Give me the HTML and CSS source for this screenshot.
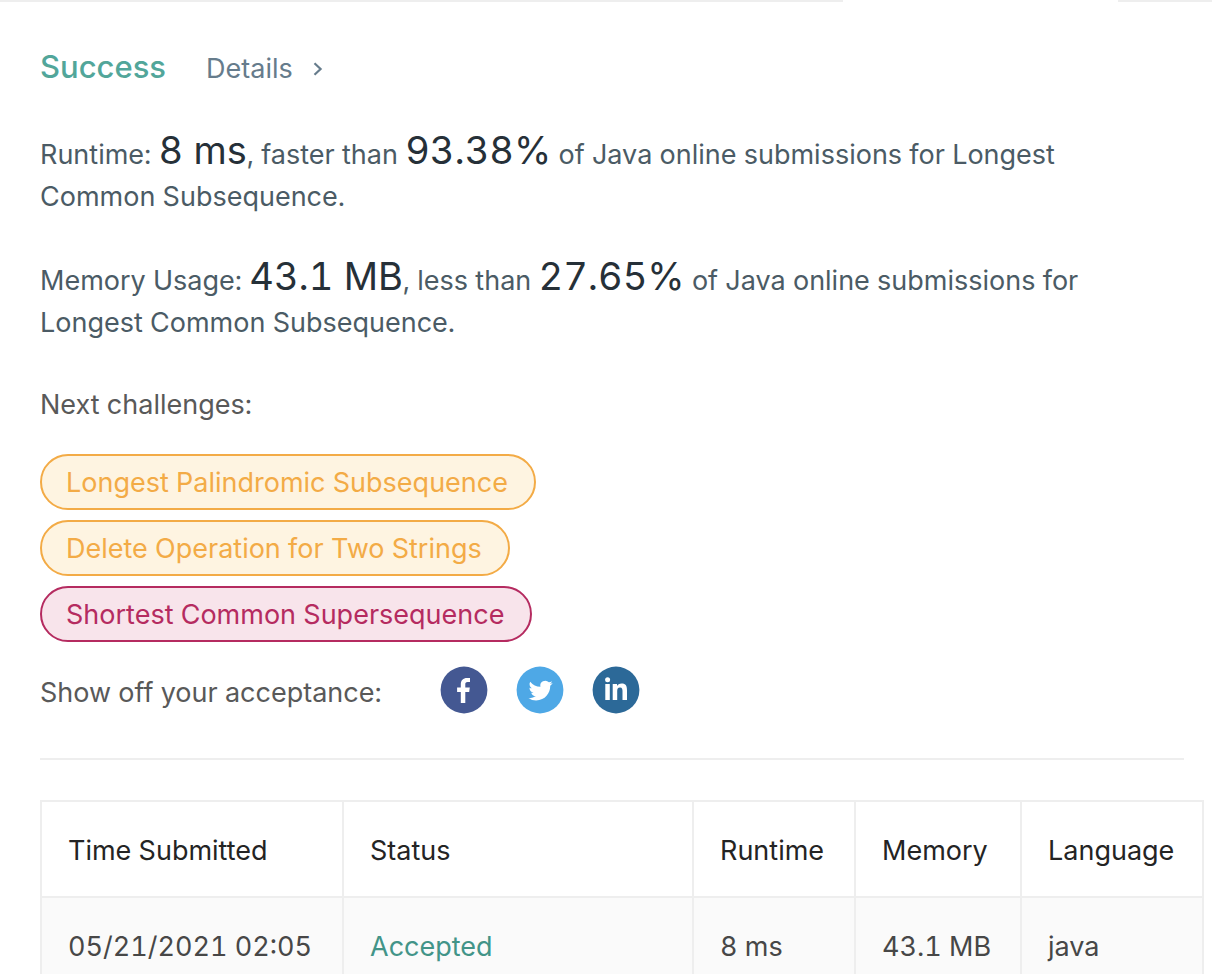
FILE: index.html
```html
<!DOCTYPE html>
<html lang="en">
<head>
<meta charset="utf-8">
<title>Submission result</title>
<link rel="stylesheet" href="styles.css">
</head>
<body>
<div class="tab-edge"><span class="edge edge-left"></span><span class="edge edge-right"></span></div>
<main class="panel">
  <header class="result">
    <h1 class="result-state">Success</h1>
    <a class="details" href="#details">Details
      <svg class="chevron" viewBox="0 0 10 14" aria-hidden="true"><path d="M1.5 1.2 7.6 7 1.5 12.8" fill="none" stroke="currentColor" stroke-width="2.2"/></svg>
    </a>
  </header>
  <div class="metrics">
    <p class="metric">Runtime: <span class="value">8 ms</span>, faster than <span class="value">93.38%</span> of Java online submissions for Longest Common Subsequence.</p>
    <p class="metric">Memory Usage: <span class="value">43.1 MB</span>, less than <span class="value">27.65%</span> of Java online submissions for Longest Common Subsequence.</p>
  </div>
  <section class="next">
    <h2 class="label">Next challenges:</h2>
    <div class="challenges">
      <a class="challenge medium" href="#lps">Longest Palindromic Subsequence</a>
      <a class="challenge medium" href="#delete">Delete Operation for Two Strings</a>
      <a class="challenge hard" href="#scs">Shortest Common Supersequence</a>
    </div>
  </section>
  <section class="share">
    <span class="label">Show off your acceptance:</span>
    <div class="share-links">
      <a href="#facebook" aria-label="Facebook"><svg class="social" viewBox="0 0 48 48"><circle cx="24" cy="24" r="23.4" fill="#445892"/><path fill="#fff" d="M20.8 37V26h-3.7v-4.400h3.700v-3.200c0-4.200 2.300-6.500 6.300-6.500 1.300 0 2.300.1 2.900.2v4h-2.400c-1.900 0-2.300.9-2.300 2.300v3.200h4.500l-.6 4.400h-3.900v11z"/></svg></a>
      <a href="#twitter" aria-label="Twitter"><svg class="social" viewBox="0 0 48 48"><circle cx="24" cy="24" r="23.4" fill="#4ea8e6"/><path transform="translate(12.500 12.800)" fill="#fff" d="M24.200 4.300a10 10 0 0 1-2.850.78 5 5 0 0 0 2.180-2.740 10 10 0 0 1-3.150 1.200 4.960 4.960 0 0 0-8.450 4.520A14.080 14.080 0 0 1 1.700 2.870a4.960 4.960 0 0 0 1.540 6.620 4.930 4.930 0 0 1-2.250-.62v.06a4.960 4.960 0 0 0 3.980 4.860 4.960 4.960 0 0 1-2.240.09 4.960 4.960 0 0 0 4.630 3.440A9.950 9.950 0 0 1 0 19.370a14.030 14.030 0 0 0 7.600 2.230c9.130 0 14.120-7.560 14.120-14.120l-.02-.64A10 10 0 0 0 24.200 4.300z"/></svg></a>
      <a href="#linkedin" aria-label="LinkedIn"><svg class="social" viewBox="0 0 48 48"><circle cx="24" cy="24" r="23.4" fill="#2c6998"/><circle cx="15.600" cy="13.700" r="2.500" fill="#fff"/><path fill="#fff" d="M13.300 17.900h4.500v16h-4.500zM20.700 17.900h4.300V20c.8-1.400 2.300-2.500 4.600-2.500 4.300 0 5.400 2.700 5.400 6.800v9.600h-4.500v-8.600c0-2-.2-3.900-2.500-3.900s-2.800 1.700-2.800 3.800v8.700h-4.500z"/></svg></a>
    </div>
  </section>
  <hr class="rule">
  <table class="submissions">
    <colgroup><col class="col-time"><col><col class="col-runtime"><col class="col-memory"><col class="col-language"></colgroup>
    <thead><tr><th>Time Submitted</th><th>Status</th><th>Runtime</th><th>Memory</th><th>Language</th></tr></thead>
    <tbody><tr><td>05/21/2021 02:05</td><td><a class="accepted" href="#submission">Accepted</a></td><td>8 ms</td><td>43.1 MB</td><td>java</td></tr></tbody>
  </table>
</main>
</body>
</html>
```
FILE: styles.css
```css
* { box-sizing: border-box; }
body {
  margin: 0;
  overflow: hidden;
  background: #fff;
  color: #595959;
  font: 27px/42px Inter, "Liberation Sans", sans-serif;
  font-variant-numeric: tabular-nums;
}
a { color: inherit; text-decoration: none; }
.tab-edge { display: flex; justify-content: space-between; gap: 275px; }
.edge { height: 2px; background: #eee; }
.edge-left { flex: 1; }
.edge-right { width: 94px; }
.panel { padding: 44px 28px 0 40px; }
.result { display: flex; align-items: baseline; gap: 40px; margin-bottom: 44px; }
.result-state { margin: 0; font-size: 31px; font-weight: 500; line-height: 42px; color: #52a69a; }
.details { display: flex; align-items: center; gap: 20px; color: #667c8c; }
.chevron { width: 10px; height: 14px; }
.metrics { display: flex; flex-direction: column; gap: 42px; margin-bottom: 40px; padding-right: 28px; }
.metric { margin: 0; color: #4b5b65; }
.value { font-size: 38px; line-height: 1px; color: #263038; }
.label { margin: 0; font-size: 27px; font-weight: 400; line-height: 42px; }
.challenges { display: flex; flex-direction: column; align-items: flex-start; gap: 10px; margin-top: 28px; }
.challenge { padding: 6px 26px 4px 24px; border: 2px solid; border-radius: 28px; }
.medium { color: #f3ab46; background: #fef4e1; }
.hard { color: #b52b60; background: #f8e4eb; }
.share { display: flex; align-items: center; gap: 58px; margin-top: 24px; }
.share .label { padding-top: 6px; }
.share-links { display: flex; gap: 28px; }
.share-links a { display: block; height: 48px; }
.social { display: block; width: 48px; height: 48px; }
.rule { height: 2px; margin: 44px 0 40px; border: 0; background: #eee; }
.submissions { width: calc(100% + 20px); table-layout: fixed; border-collapse: collapse; text-align: left; white-space: nowrap; }
.submissions th, .submissions td { padding: 28px 26px 24px; border: 2px solid #eee; }
.submissions th { font-weight: 400; color: #242424; }
.submissions td { color: #474747; background: #fafafa; }
.submissions .accepted { color: #429488; }
.col-time { width: 302px; }
.col-runtime { width: 162px; }
.col-memory { width: 166px; }
.col-language { width: 182px; }
```
